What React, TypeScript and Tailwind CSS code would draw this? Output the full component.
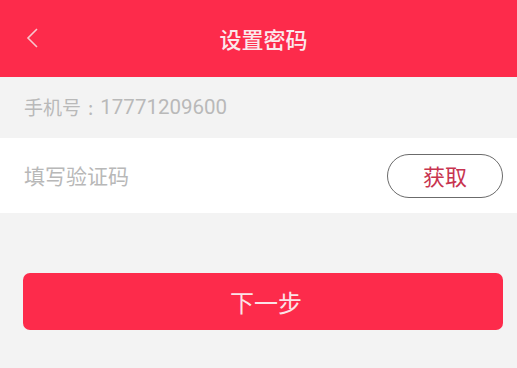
export default function App() {
  const font = { fontFamily: '"Noto Sans CJK SC", "Noto Sans", sans-serif' };
  return (
    <div className="w-[517px] h-[368px] bg-[#f3f3f3] overflow-hidden" style={font}>
      <header className="h-[77px] bg-[#fd2b4b] flex items-center relative">
        <button className="absolute left-[24px] top-[26px] w-[16px] h-[24px] text-[#f8c6cd]">
          <svg viewBox="0 0 16 24" width="16" height="24" fill="none" stroke="currentColor" strokeWidth="1.6">
            <path d="M13 3 L4 12 L13 21" />
          </svg>
        </button>
        <h1 className="flex-1 text-center text-[22px] font-medium text-[#fbe9ec] pl-[10px]">设置密码</h1>
      </header>

      <div className="h-[61px] flex items-center pl-[24px] text-[19px] text-[#b9b9b9]">
        手机号<span className="px-[7px]">:</span>
        <span className="text-[20.5px]" style={{ fontFamily: 'Roboto, sans-serif' }}>17771209600</span>
      </div>

      <div className="h-[75px] bg-white flex items-center justify-between pl-[24px] pr-[14px]">
        <span className="text-[21px] text-[#b8b8b8]">填写验证码</span>
        <button className="w-[116px] h-[44px] rounded-full border-[1.5px] border-[#6b6b6b] text-[22px] text-[#c8344f]">
          获取
        </button>
      </div>

      <div className="pl-[23px] pr-[14px] pt-[60px]">
        <button className="w-full h-[57px] rounded-[7px] bg-[#fd2b4b] text-[24px] text-[#fbe3e7] pl-[6px]">
          下一步
        </button>
      </div>
    </div>
  );
}
